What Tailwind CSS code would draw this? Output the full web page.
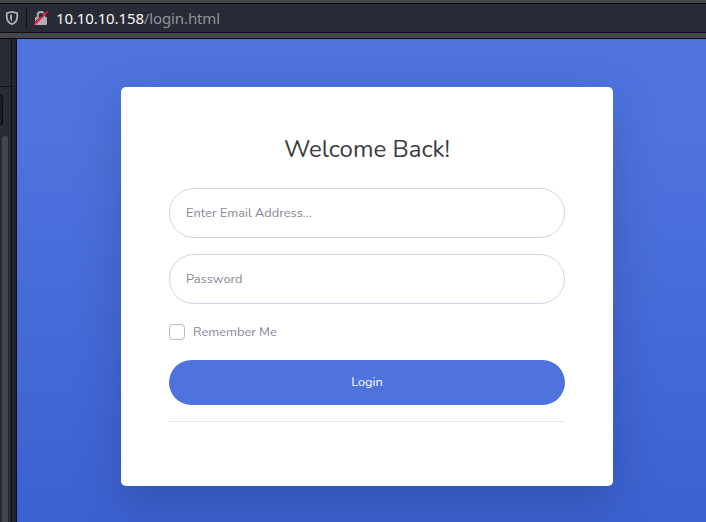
<!DOCTYPE html>
<html lang="en">
<head>
<meta charset="utf-8">
<title>Login</title>
<script src="https://cdn.jsdelivr.net/npm/@tailwindcss/browser@4"></script>
</head>
<body class="h-[522px] w-[706px] overflow-hidden bg-[#282a36] font-['Nunito','Lato',sans-serif]">
<div class="flex h-[522px] flex-col">
  <header class="flex h-[39px] shrink-0 flex-col border-b border-[#0e0f13] bg-[#45474d] pt-[3px] pb-[5px]">
    <div class="flex h-[30px] items-center border-y border-[#0e0f13] bg-[#282a36] pl-[5px]">
      <svg class="h-[14px] w-[14px]" viewBox="0 0 14 14" fill="none">
        <path d="M7 .9 L12.2 2.2 V6 C12.2 9.5 10 12 7 13.1 C4 12 1.8 9.5 1.8 6 V2.2 Z" stroke="#aeafb2" stroke-width="1.8" stroke-linejoin="round"/>
        <path d="M7 3.5 L5 4 V6 C5 8.3 5.7 9.6 7 10.4 Z" fill="#aeafb2"/>
      </svg>
      <div class="ml-[7px] h-[22px] w-px bg-[#101116]"></div>
      <svg class="ml-[6px] h-[16px] w-[16px]" viewBox="0 0 16 16" fill="none">
        <path d="M4.7 7.5 V5 C4.7 .9 11.3 .9 11.3 5 V7.5" stroke="#aeafb2" stroke-width="2"/>
        <rect x="2" y="7" width="12" height="8" rx="1.3" fill="#aeafb2"/>
        <path d="M1 13 L12.8 1.2" stroke="#282a36" stroke-width=".8"/>
        <path d="M1.6 14.4 L14.2 1.8" stroke="#ee1040" stroke-width="1.7" stroke-linecap="round"/>
      </svg>
      <div class="ml-[7px] whitespace-nowrap font-['Noto_Sans',sans-serif] text-[15px] leading-[20px] tracking-[-0.12px] text-[#f8f8f2]">10.10.10.158<span class="text-[#92939a]">/login.html</span></div>
    </div>
  </header>
  <div class="flex min-h-0 flex-1">
    <aside class="flex w-[12px] shrink-0 flex-col border-r border-[#0e0f13] bg-[#282a36]">
      <div class="h-[48px] shrink-0 border-b border-[#0e0f13]"></div>
      <div class="mt-[8px] h-[30px] w-[3px] shrink-0 rounded-r-[3px] border-y border-r border-[#0b0c10] bg-[#1b1c24]"></div>
      <div class="mt-[11px] ml-[2px] w-[6px] flex-1 rounded-t-[3px] bg-[#45474d]"></div>
    </aside>
    <div class="w-[5px] shrink-0 border-r border-[#0e0f13] bg-[#22242e]"></div>
    <main class="flex-1 overflow-hidden bg-[linear-gradient(180deg,#4e73df_98px,#224abe_985px)] pt-[48px] pl-[104px]">
      <div class="h-[399px] w-[492px] rounded-[5px] bg-white px-[48px] pt-[48px] shadow-[0_16px_48px_rgba(0,0,0,0.175)]">
        <h1 class="h-[29px] text-center text-[24px] leading-[29px] text-[#3a3b45]">Welcome Back!</h1>
        <form class="mt-[24px] text-[12.8px]">
          <div class="flex h-[50px] items-center rounded-full border border-[#d1d3e2] px-4 pt-px text-[#858796]">Enter Email Address...</div>
          <div class="mt-4 flex h-[50px] items-center rounded-full border border-[#d1d3e2] px-4 pt-px text-[#858796]">Password</div>
          <div class="mt-[18px] flex h-[20px] items-center text-[#858796]"><span class="mr-2 h-4 w-4 rounded-[4px] border border-[#b7b9cc]"></span><span class="pt-px">Remember Me</span></div>
          <div class="mt-[18px] flex h-[45px] items-center justify-center rounded-full bg-[#4e73df] text-white">Login</div>
          <div class="mt-4 h-px bg-[#e5e5e5]"></div>
        </form>
      </div>
    </main>
  </div>
</div>
</body>
</html>
